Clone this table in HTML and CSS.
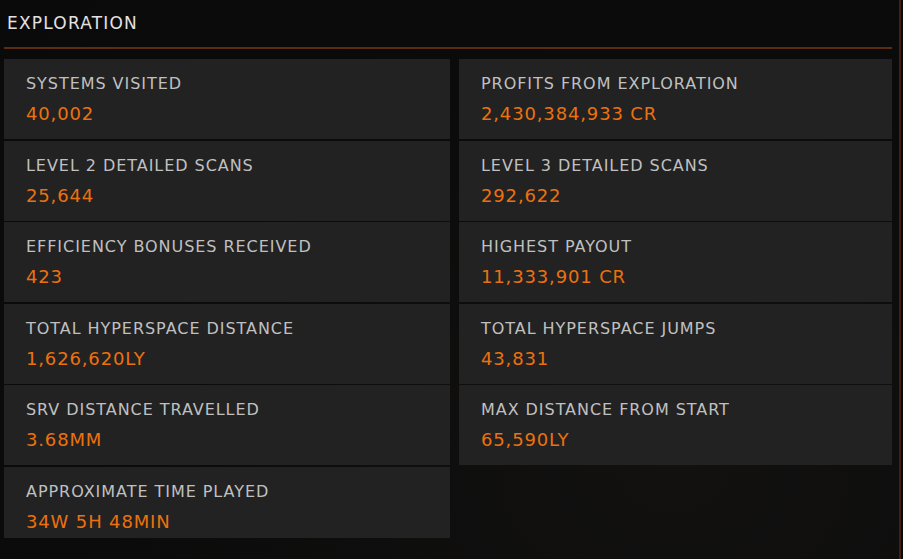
FILE: index.html
```html
<!DOCTYPE html>
<html>
<head>
<meta charset="utf-8">
<link rel="stylesheet" href="styles.css">
</head>
<body>
<div class="frame">
  <div class="panel">
    <h1 class="title">EXPLORATION</h1>
    <div class="grid">
      <div class="card"><div class="label">SYSTEMS VISITED</div><div class="value">40,002</div></div>
      <div class="card"><div class="label">PROFITS FROM EXPLORATION</div><div class="value">2,430,384,933 CR</div></div>
      <div class="card"><div class="label">LEVEL 2 DETAILED SCANS</div><div class="value">25,644</div></div>
      <div class="card"><div class="label">LEVEL 3 DETAILED SCANS</div><div class="value">292,622</div></div>
      <div class="card"><div class="label">EFFICIENCY BONUSES RECEIVED</div><div class="value">423</div></div>
      <div class="card"><div class="label">HIGHEST PAYOUT</div><div class="value">11,333,901 CR</div></div>
      <div class="card"><div class="label">TOTAL HYPERSPACE DISTANCE</div><div class="value">1,626,620LY</div></div>
      <div class="card"><div class="label">TOTAL HYPERSPACE JUMPS</div><div class="value">43,831</div></div>
      <div class="card"><div class="label">SRV DISTANCE TRAVELLED</div><div class="value">3.68MM</div></div>
      <div class="card"><div class="label">MAX DISTANCE FROM START</div><div class="value">65,590LY</div></div>
      <div class="card card-last"><div class="label">APPROXIMATE TIME PLAYED</div><div class="value">34W 5H 48MIN</div></div>
    </div>
  </div>
</div>
</body>
</html>
```

FILE: styles.css
```css
html, body {
  margin: 0;
  padding: 0;
  background: #0a0a0a;
  height: 100%;
}
body {
  font-family: "DejaVu Sans", sans-serif;
  overflow: hidden;
}
.frame {
  width: 901px;
  height: 559px;
  box-sizing: border-box;
  border-right: 2px solid #3e220f;
  background: radial-gradient(ellipse at 75% 85%, #121110 0%, #0b0b0b 60%, #0a0a0a 100%);
}
.panel {
  width: 888px;
  margin-left: 4px;
}
.title {
  margin: 0;
  padding: 13px 0 0 3px;
  height: 34px;
  font-size: 17px;
  line-height: 20px;
  font-weight: normal;
  letter-spacing: 1.2px;
  color: #e2e2e2;
  border-bottom: 2px solid #5a2d0f;
}
.grid {
  margin-top: 10px;
  display: grid;
  grid-template-columns: 446px 433px;
  grid-auto-rows: 80px;
  column-gap: 9px;
  row-gap: 1.5px;
}
.card {
  background: #222222;
  padding: 15px 0 0 22px;
  box-sizing: border-box;
}
.card-last {
  height: 71px;
}
.label {
  font-size: 16px;
  line-height: 20px;
  letter-spacing: 0.95px;
  color: #c0c0c0;
}
.value {
  margin-top: 9px;
  font-size: 18px;
  line-height: 22px;
  letter-spacing: 0.85px;
  color: #ec710e;
}
```
